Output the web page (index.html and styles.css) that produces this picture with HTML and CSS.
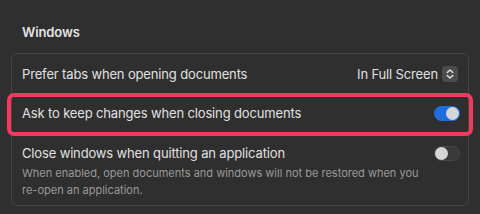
FILE: index.html
```html
<!DOCTYPE html>
<html lang="en">
<head>
<meta charset="utf-8">
<title>Windows settings</title>
<link rel="stylesheet" href="styles.css">
</head>
<body>
<section class="section">
  <h2 class="section-title">Windows</h2>
  <div class="card">
    <div class="row row-first">
      <span class="label">Prefer tabs when opening documents</span>
      <div class="popup">
        <span class="popup-value">In Full Screen</span>
        <span class="stepper">
          <svg width="16" height="16" viewBox="0 0 16 16" aria-hidden="true">
            <path d="M5.2 6.6 L8 3.9 L10.8 6.6" fill="none" stroke="#e2e2e2" stroke-width="1.4" stroke-linecap="round" stroke-linejoin="round"/>
            <path d="M5.2 9.4 L8 12.1 L10.8 9.4" fill="none" stroke="#e2e2e2" stroke-width="1.4" stroke-linecap="round" stroke-linejoin="round"/>
          </svg>
        </span>
      </div>
    </div>
    <div class="row row-highlight">
      <span class="label">Ask to keep changes when closing documents</span>
      <span class="switch switch-on"><span class="knob"></span></span>
    </div>
    <div class="row row-last">
      <div class="text-block">
        <div class="label">Close windows when quitting an application</div>
        <div class="desc">When enabled, open documents and windows will not be restored when you re-open an application.</div>
      </div>
      <span class="switch switch-off"><span class="knob"></span></span>
    </div>
  </div>
</section>
</body>
</html>
```
FILE: styles.css
```css
html, body {
  margin: 0;
  padding: 0;
  background: #2f2f2f;
}
body {
  width: 480px;
  height: 214px;
  overflow: hidden;
  font-family: "Inter", "Liberation Sans", sans-serif;
  color: #dedede;
  -webkit-font-smoothing: antialiased;
}
.section {
  padding: 24px 11px 0 11px;
}
.section-title {
  margin: 0 0 13px 0;
  padding-left: 11px;
  font-size: 13px;
  line-height: 16px;
  font-weight: 600;
  color: #e4e4e4;
  letter-spacing: -0.1px;
}
.card {
  border: 1px solid #474747;
  border-radius: 6px;
}
.row {
  margin: 0 8px 0 10px;
  display: flex;
  align-items: center;
  justify-content: space-between;
  border-bottom: 1px solid #424242;
  position: relative;
}
.row-first {
  height: 39px;
}
.row-highlight {
  height: 38px;
}
.row-last {
  border-bottom: none;
  align-items: flex-start;
  padding: 12px 0 6px 0;
}
.label {
  font-size: 13px;
  line-height: 16px;
  color: #e0e0e0;
  letter-spacing: -0.15px;
}
.popup {
  display: flex;
  align-items: center;
  gap: 4px;
  margin-right: 2px;
}
.popup-value {
  font-size: 13px;
  line-height: 16px;
  color: #e0e0e0;
  letter-spacing: -0.15px;
}
.stepper {
  width: 16px;
  height: 16px;
  border-radius: 4px;
  background: #4c4c4c;
  display: flex;
}
.switch {
  width: 26px;
  height: 15px;
  border-radius: 8px;
  box-sizing: border-box;
  display: flex;
  align-items: center;
  padding: 0 1px;
  flex-shrink: 0;
}
.switch-on {
  background: #1e6ee0;
  justify-content: flex-end;
}
.switch-off {
  background: #393939;
  border: 1px solid #4a4a4a;
  padding: 0;
  justify-content: flex-start;
  margin-top: 1px;
}
.knob {
  width: 13px;
  height: 13px;
  border-radius: 50%;
  background: #d6d6d6;
}
.row-highlight::after {
  content: "";
  position: absolute;
  left: -15px;
  right: -13px;
  top: -1px;
  bottom: -4px;
  border: 4px solid #f43a5c;
  border-radius: 7px;
  pointer-events: none;
}
.text-block {
  width: 410px;
}
.desc {
  margin-top: 4px;
  font-size: 11px;
  line-height: 17px;
  color: #9a9a9a;
}
```
